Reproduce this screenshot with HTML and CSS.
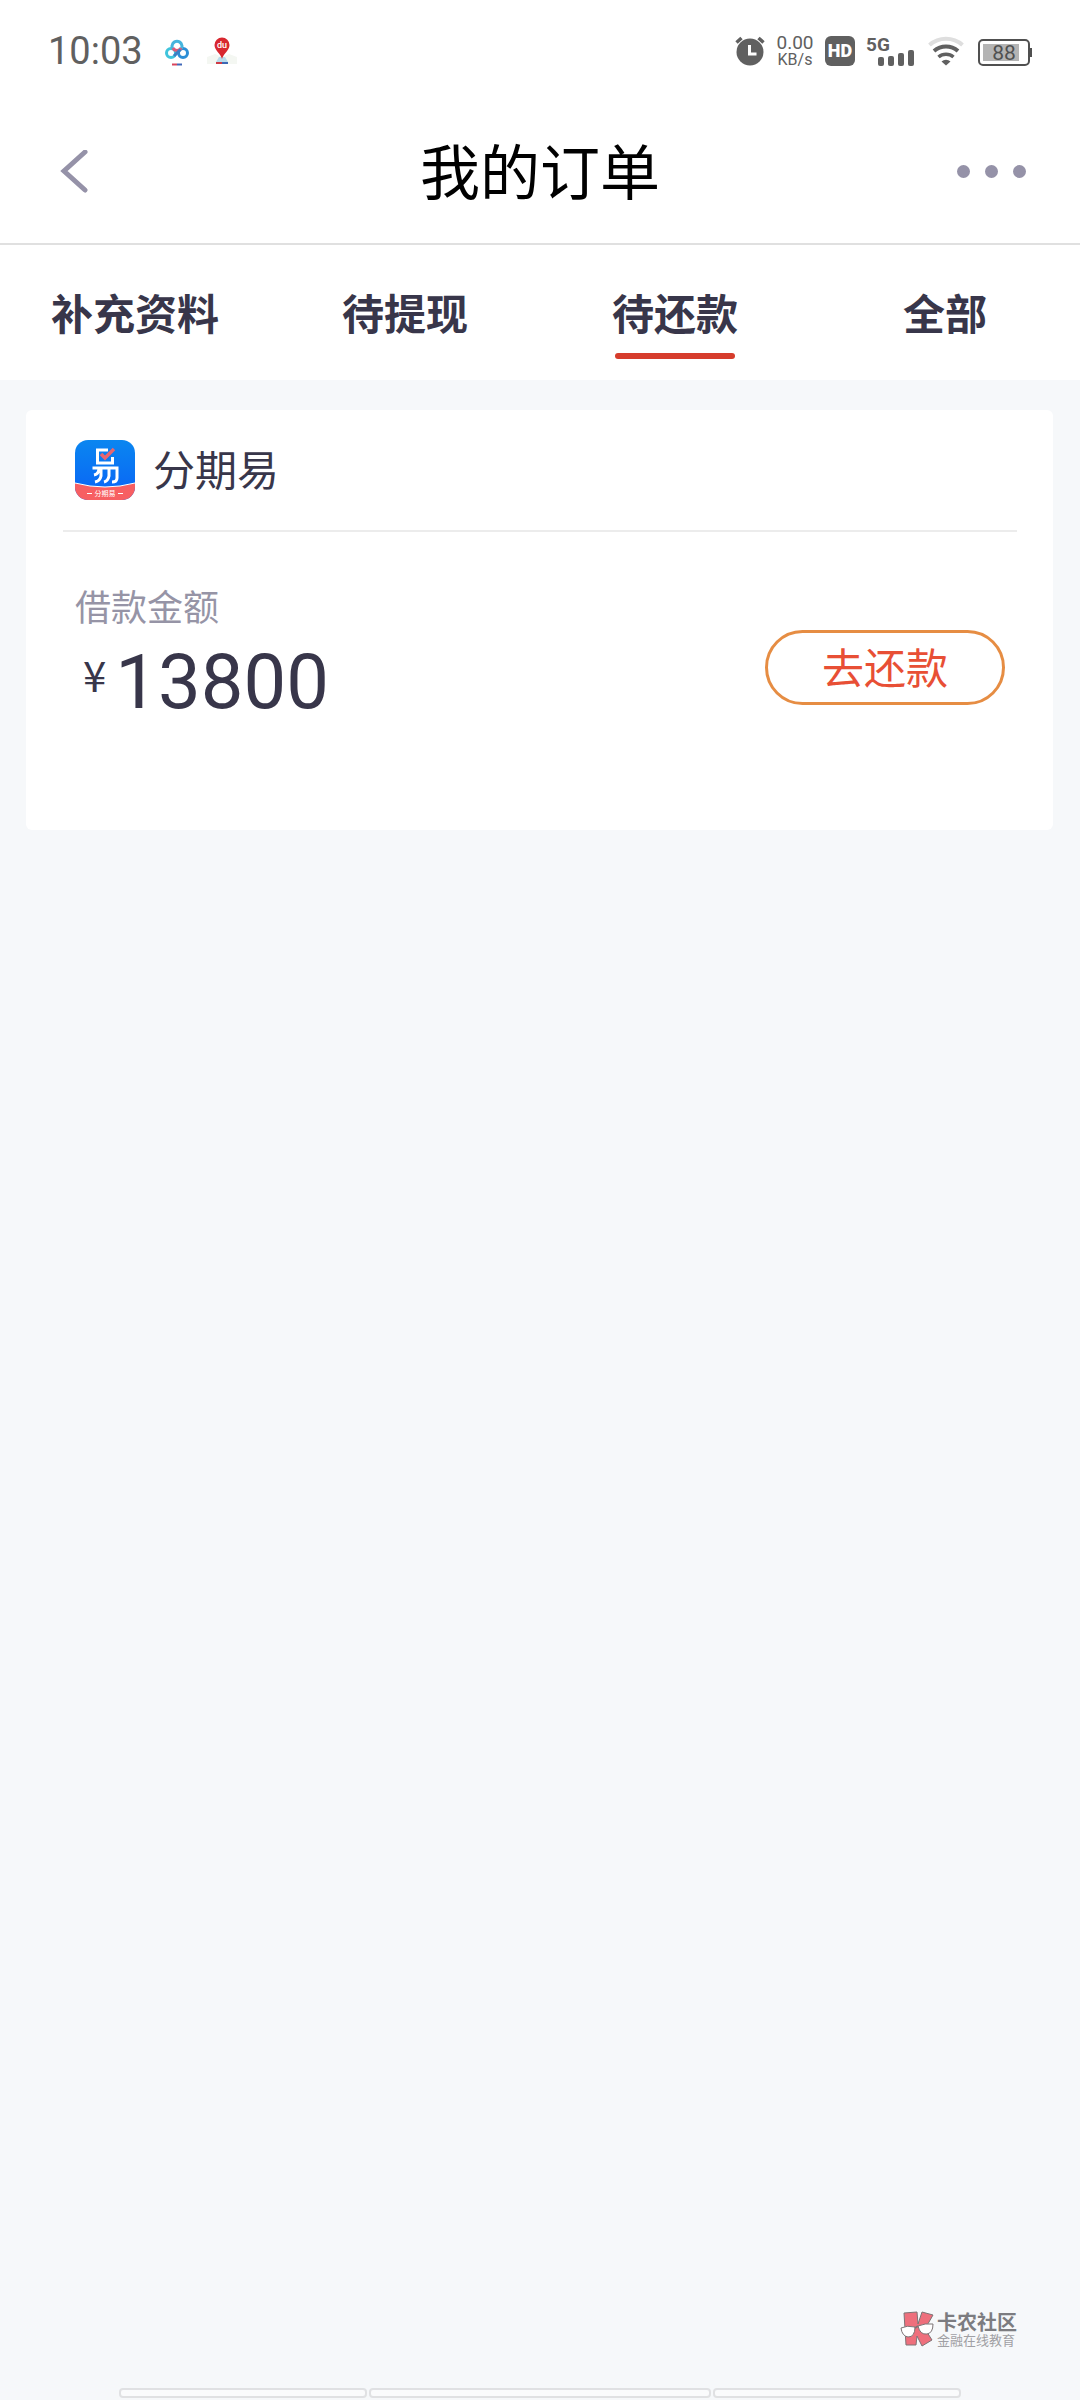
FILE: index.html
```html
<!DOCTYPE html>
<html lang="zh-CN">
<head>
<meta charset="utf-8">
<meta name="viewport" content="width=device-width, initial-scale=1">
<title>我的订单</title>
<link rel="stylesheet" href="styles.css">
</head>
<body>
<div class="status">
  <span class="clock">10:03</span>
  <svg class="app-cloud" width="24" height="30" viewBox="0 0 24 30" fill="none" stroke-width="3">
    <circle cx="6" cy="17" r="4.5" stroke="#3fc4dc"/>
    <circle cx="18" cy="17" r="4.5" stroke="#2c8ed6"/>
    <path d="M7.5 12.5A5 5 0 1 1 16.500 12.500" stroke="#45b4dd"/>
    <path d="M8 12a4.500 4.500 0 0 0 8 0" stroke="#dd5a78"/>
    <path d="M9 20L15.500 13.500" stroke="#3b7fc4"/>
    <path d="M7 28.500h5" stroke="#d8455c" stroke-width="2"/>
    <path d="M12 28.500h5" stroke="#4168b8" stroke-width="2"/>
  </svg>
  <svg class="app-map" width="30" height="30" viewBox="0 0 30 30">
    <path d="M0 21l8-3 7 3 7-3 8 3v7H0z" fill="#f4f7f2"/>
    <path d="M12 21h6l3 5H9z" fill="#b9dcec"/>
    <path d="M9 26h6v2H9z" fill="#cf3b46"/>
    <path d="M15 26h6v2h-6z" fill="#3b68b4"/>
    <path d="M15 23C14 18 7.500 14.500 7.500 9a7.500 7.500 0 0 1 15 0C22.500 14.500 16 18 15 23z" fill="#d8272f"/>
    <text x="15" y="12" class="pin-text">du</text>
  </svg>
  <div class="status-icons">
    <svg width="30" height="30" viewBox="0 0 30 30">
      <circle cx="15" cy="16" r="13.500" fill="#606060"/>
      <path d="M1.500 6.500L6.500 2M28.500 6.500L23.500 2" stroke="#606060" stroke-width="3.500"/>
      <path d="M14.500 9v9h7" fill="none" stroke="#fff" stroke-width="3"/>
    </svg>
    <div class="speed"><span class="speed-num">0.00</span><span class="speed-unit">KB/s</span></div>
    <span class="hd">HD</span>
    <svg class="signal" width="48" height="30" viewBox="0 0 48 30" fill="#606060">
      <text x="0" y="15" class="signal-text">5G</text>
      <rect x="12" y="21" width="6" height="9" rx="2"/>
      <rect x="22" y="20" width="6" height="10" rx="2"/>
      <rect x="32" y="17" width="6" height="13" rx="2"/>
      <rect x="42" y="14" width="6" height="16" rx="2"/>
    </svg>
    <svg class="wifi" width="36" height="30" viewBox="0 0 36 30" fill="none" stroke-width="4">
      <path d="M1.500 9a25 25 0 0 1 33 0" stroke="#dedede"/>
      <path d="M6 15a18.500 18.500 0 0 1 24 0" stroke="#606060"/>
      <path d="M10.500 21a11.500 11.500 0 0 1 15 0" stroke="#606060" stroke-width="3.500"/>
      <path d="M13.500 25.500a6.500 6.500 0 0 1 9 0L18 29.500z" fill="#606060"/>
    </svg>
    <svg class="battery" width="54" height="30" viewBox="0 0 54 30">
      <rect x="1" y="4" width="50" height="25" rx="4" fill="none" stroke="#505050" stroke-width="2"/>
      <rect x="5" y="8" width="36" height="17" fill="#b4b4b4"/>
      <rect x="52" y="12" width="2" height="9" fill="#505050"/>
      <text x="26" y="24" class="battery-text">88</text>
    </svg>
  </div>
</div>

<header class="header">
  <button class="icon-button back" type="button" aria-label="返回">
    <svg width="28" height="46" viewBox="0 0 28 46" fill="none" stroke="#9592a8" stroke-width="5" stroke-linecap="round"><path d="M25 2L4 21L25 40"/></svg>
  </button>
  <h1 class="title">我的订单</h1>
  <button class="icon-button more" type="button" aria-label="更多">
    <svg width="69" height="16" viewBox="0 0 69 16" fill="#9592a8"><circle cx="6.500" cy="6.500" r="6.500"/><circle cx="34.500" cy="6.500" r="6.500"/><circle cx="62.500" cy="6.500" r="6.500"/></svg>
  </button>
</header>

<nav class="tabs">
  <a class="tab" href="#info">补充资料</a>
  <a class="tab" href="#withdraw">待提现</a>
  <a class="tab active" href="#repay" aria-current="page">待还款</a>
  <a class="tab" href="#all">全部</a>
</nav>

<main class="orders">
  <article class="card">
    <div class="card-head">
      <svg width="60" height="60" viewBox="0 0 60 60">
        <defs>
          <linearGradient id="blue" x1="0" y1="0" x2="0" y2="1"><stop offset="0" stop-color="#0a86f0"/><stop offset="1" stop-color="#0a62f6"/></linearGradient>
          <clipPath id="shape"><rect width="60" height="60" rx="13"/></clipPath>
        </defs>
        <g clip-path="url(#shape)">
          <rect width="60" height="60" fill="url(#blue)"/>
          <path d="M0 43Q30 51 60 43V60H0z" fill="#f75f62"/>
          <path d="M0 43Q30 51 60 43" fill="none" stroke="#fff" stroke-width="1"/>
          <path d="M33 10H22.500V23H37.500V17" fill="none" stroke="#fff" stroke-width="3"/>
          <path d="M17.500 28H42V38Q42 42 37 42M24 28Q24 34 19 35M34 29V36Q33 41 29 42M26 29V36Q25 41 20 42" fill="none" stroke="#fff" stroke-width="3"/>
          <path d="M26 14L30 18L39 9" fill="none" stroke="#e8666f" stroke-width="3.500"/>
          <path d="M12 53.500h5M43 53.500h5" stroke="#fff" stroke-width="1"/>
          <text x="30" y="56" class="ribbon-text">分期易</text>
        </g>
      </svg>
      <h2 class="app-name">分期易</h2>
    </div>
    <div class="card-body">
      <div class="loan">
        <span class="label">借款金额</span>
        <span class="amount"><span class="currency">¥</span>13800</span>
      </div>
      <button class="repay" type="button">去还款</button>
    </div>
  </article>
</main>

<footer class="footer">
  <div class="brand">
    <svg width="34" height="36" viewBox="0 0 34 36" stroke="#7d7476" stroke-width="1">
      <path d="M4 2L17 1L18 13L22 1L33 4L25 18L32 29L22 35L17 25L16 34H6z" fill="#ee6f7c"/>
      <path d="M1 17Q7 14 15 16Q15 26 8 26Q2 25 1 17z" fill="#fff"/>
      <path d="M18 15Q25 12 33 13Q33 22 27 23Q20 24 18 15z" fill="#fff"/>
      <path d="M15 17L18 15" stroke-width="2"/>
    </svg>
    <div class="brand-text"><span class="brand-name">卡农社区</span><span class="brand-sub">金融在线教育</span></div>
  </div>
  <div class="dock"><span class="dock-side"></span><span class="dock-mid"></span><span class="dock-side"></span></div>
</footer>
</body>
</html>
```
FILE: styles.css
```css
* { box-sizing: border-box; }

body {
  margin: 0;
  min-height: 100vh;
  display: flex;
  flex-direction: column;
  background: #f6f8fa;
  color: #38364a;
  font-family: Roboto, "Noto Sans CJK SC", sans-serif;
}

h1, h2 { margin: 0; font-weight: 400; }
button { font: inherit; background: none; border: 0; padding: 0; cursor: pointer; }
svg { display: block; flex: none; }

.status {
  display: flex;
  align-items: center;
  height: 102px;
  padding: 0 48px;
  background: #fff;
  color: #606060;
}
.clock { font-size: 38px; line-height: 44px; }
.app-cloud { margin-left: 22px; }
.app-map { margin-left: 18px; }
.pin-text { font-size: 9px; font-weight: 500; fill: #fff; text-anchor: middle; }
.status-icons { display: flex; align-items: center; margin-left: auto; }
.speed {
  display: flex;
  flex-direction: column;
  align-items: center;
  width: 40px;
  margin: 0 10px;
}
.speed-num { font-size: 19px; line-height: 17px; }
.speed-unit { font-size: 16px; line-height: 17px; }
.hd {
  width: 30px;
  height: 30px;
  border-radius: 6px;
  background: #606060;
  color: #fff;
  font-size: 18px;
  font-weight: 900;
  line-height: 30px;
  text-align: center;
}
.signal { margin-left: 11px; overflow: visible; }
.signal-text { font-size: 19px; font-weight: 700; }
.wifi { margin-left: 14px; }
.battery { margin-left: 14px; }
.battery-text { font-size: 21px; fill: #505050; text-anchor: middle; }

.header {
  display: grid;
  grid-template-columns: 1fr auto 1fr;
  align-items: center;
  height: 143px;
  padding: 0 54px;
  background: #fff;
  border-bottom: 2px solid #e0e0e0;
}
.icon-button { justify-self: start; }
.back { padding-left: 6px; }
.more { justify-self: end; }
.title { padding-top: 4px; color: #000; font-size: 60px; line-height: 72px; }

.tabs {
  display: grid;
  grid-template-columns: repeat(4, 1fr);
  height: 135px;
  background: #fff;
}
.tab {
  display: flex;
  flex-direction: column;
  align-items: center;
  gap: 12px;
  padding-top: 46px;
  color: inherit;
  font-size: 42px;
  font-weight: 700;
  line-height: 50px;
  text-decoration: none;
}
.active::after {
  content: "";
  width: 120px;
  height: 6px;
  border-radius: 3px;
  background: #d63c2c;
}

.orders { padding: 30px 27px 30px 26px; }
.card {
  padding: 0 36px 0 37px;
  border-radius: 6px;
  background: #fff;
}
.card-head {
  display: flex;
  align-items: center;
  gap: 18px;
  height: 122px;
  padding-left: 12px;
  border-bottom: 2px solid #ececec;
}
.app-name { padding-top: 4px; font-size: 42px; line-height: 50px; }
.card-body {
  display: flex;
  justify-content: space-between;
  align-items: flex-start;
  height: 298px;
  padding: 53px 12px 0;
}
.loan { display: flex; flex-direction: column; gap: 4px; }
.label { color: #9694a6; font-size: 36px; line-height: 48px; }
.amount {
  display: flex;
  align-items: flex-start;
  padding-left: 8px;
  font-size: 76px;
  line-height: 90px;
}
.currency {
  margin-right: 9px;
  font-family: "Noto Sans CJK SC", sans-serif;
  font-size: 42px;
  line-height: 74px;
}
.repay {
  width: 240px;
  height: 75px;
  margin-top: 45px;
  padding-top: 4px;
  border: 3px solid #e68d43;
  border-radius: 38px;
  color: #e84f35;
  font-size: 42px;
  line-height: 50px;
}
.ribbon-text { font-size: 7px; fill: #fff; text-anchor: middle; }

.footer { margin-top: auto; }
.brand {
  display: flex;
  justify-content: flex-end;
  align-items: center;
  gap: 3px;
  padding: 0 63px 39px 0;
}
.brand-text { display: flex; flex-direction: column; padding-top: 4px; color: #7c7c80; }
.brand-name { font-size: 20px; font-weight: 700; line-height: 20px; }
.brand-sub { font-size: 13px; line-height: 16px; color: #a0a0a4; }
.dock { display: flex; gap: 2px; padding: 0 11% 2px; }
.dock-side, .dock-mid {
  height: 10px;
  border: 2px solid #e0e1e3;
  border-radius: 4px;
  background: #fafbfc;
}
.dock-side { flex: 248; }
.dock-mid { flex: 342; }
```
